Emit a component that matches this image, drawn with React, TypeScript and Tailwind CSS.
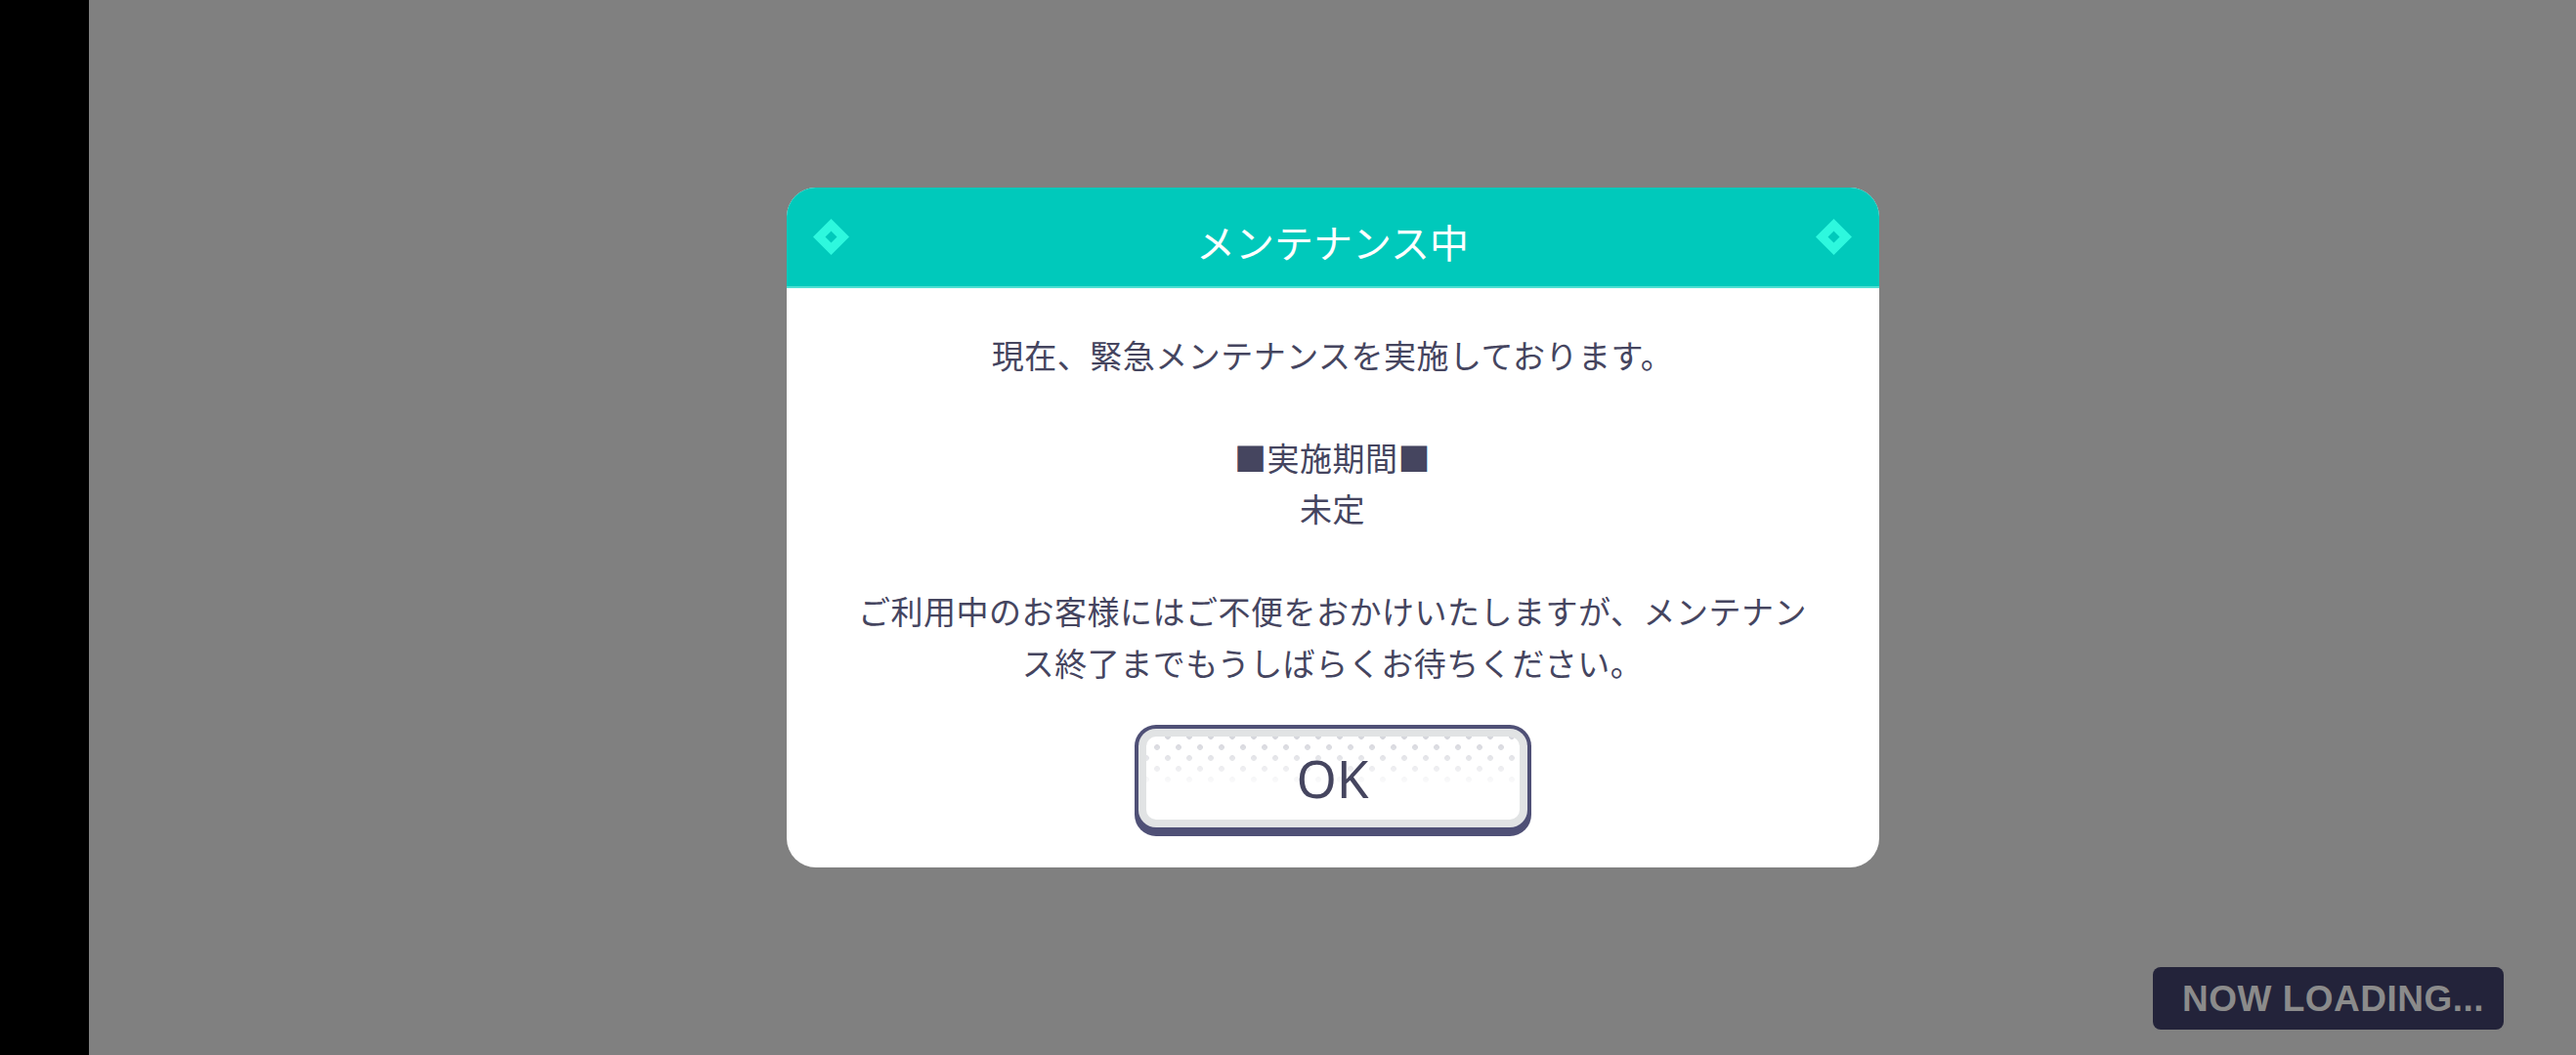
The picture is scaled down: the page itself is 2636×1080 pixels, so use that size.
import React from "react";

function Diamond() {
  return (
    <svg width="37" height="37" viewBox="0 0 37 37" className="shrink-0">
      <path
        fillRule="evenodd"
        d="M18.5 0 L37 18.5 L18.5 37 L0 18.5 Z M18.5 12.5 L24.5 18.5 L18.5 24.5 L12.5 18.5 Z"
        fill="#2ef8de"
      />
    </svg>
  );
}

export default function App() {
  const jp = "font-['Noto_Sans_CJK_JP','Noto_Sans',sans-serif]";
  return (
    <div className="flex w-[2636px] h-[1080px] overflow-hidden">
      <div className="w-[91px] h-full bg-black shrink-0" />
      <div className="relative flex-1 h-full bg-[#808080] flex items-center justify-center">
        <div className="w-[1118px] rounded-[30px] overflow-hidden bg-white flex flex-col">
          <div className="h-[103px] bg-[#00c9bb] border-b-[2px] border-[#4fe0d3] flex items-center justify-between px-[27px]">
            <Diamond />
            <div className={`${jp} text-[40px] leading-none text-white pt-[9px]`}>メンテナンス中</div>
            <Diamond />
          </div>
          <div className="flex flex-col items-center pt-[42px] pb-[32px]">
            <div
              className={`${jp} w-[990px] text-center text-[33px] leading-[52.5px] tracking-[0.5px] text-[#45455f]`}
            >
              <p>現在、緊急メンテナンスを実施しております。</p>
              <p>&nbsp;</p>
              <p>■実施期間■</p>
              <p>未定</p>
              <p>&nbsp;</p>
              <p>ご利用中のお客様にはご不便をおかけいたしますが、メンテナンス終了までもうしばらくお待ちください。</p>
            </div>
            <button className="mt-[38px] w-[406px] rounded-[22px] bg-[#4f5076] pt-[4px] px-[4px] pb-[9px]">
              <div className="rounded-[18px] bg-[#e1e3e4] p-[8px]">
                <div className="relative h-[85px] rounded-[10px] bg-white overflow-hidden flex items-center justify-center">
                  <div className="absolute inset-0 [background-image:radial-gradient(circle,#d6d7dd_2.6px,transparent_3.2px),radial-gradient(circle,#d6d7dd_2.6px,transparent_3.2px)] [background-size:22px_22px] [background-position:0_0,11px_11px] [mask-image:linear-gradient(to_bottom,#000_5%,transparent_62%)]" />
                  <span className="relative font-['Noto_Sans','Roboto',sans-serif] text-[53px] leading-none text-[#45455f]">
                    OK
                  </span>
                </div>
              </div>
            </button>
          </div>
        </div>
        <div className="absolute right-[74px] bottom-[26px] w-[359px] h-[64px] rounded-[8px] bg-[#23233a] flex items-center pl-[30px]">
          <span className="font-['Liberation_Sans',Arial,sans-serif] font-bold text-[37px] leading-none tracking-[0.5px] text-[#8b8b8b]">
            NOW LOADING...
          </span>
        </div>
      </div>
    </div>
  );
}
